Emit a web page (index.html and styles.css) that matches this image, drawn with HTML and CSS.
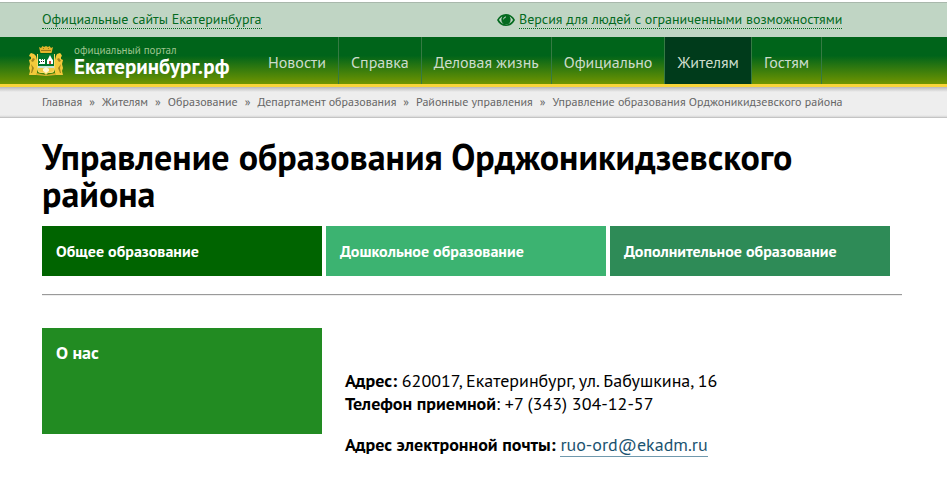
FILE: index.html
```html
<!DOCTYPE html>
<html lang="ru">
<head>
<meta charset="utf-8">
<meta name="viewport" content="width=device-width, initial-scale=1">
<title>Управление образования Орджоникидзевского района</title>
<link rel="stylesheet" href="styles.css">
</head>
<body>
<div class="topbar">
  <div class="wrap topbar-inner">
    <a class="dotted" href="#">Официальные сайты Екатеринбурга</a>
    <div class="access">
      <svg class="eye" viewBox="0 0 18 14" aria-hidden="true">
        <path fill="#046a1f" fill-rule="evenodd" d="M0 7C2 3 5 1 9 1s7 2 9 6c-2 4-5 6-9 6S2 11 0 7ZM2 7c1.600 2.700 4 4.300 7 4.300S14.400 9.700 16 7c-.8-1.500-2-2.700-3.400-3.400A4.800 4.800 0 0 1 13.600 7 4.600 4.600 0 0 1 4.400 7a4.800 4.800 0 0 1 1-3.400C4 4.300 2.800 5.500 2 7Z"/>
        <circle cx="9" cy="6.500" r="4" fill="#046a1f"/>
        <path d="M6.600 6.300A2.500 2.500 0 0 1 9 3.900" fill="none" stroke="#c0d5c4" stroke-width="1"/>
      </svg>
      <a class="dotted" href="#">Версия для людей с ограниченными возможностями</a>
    </div>
  </div>
</div>
<header class="header">
  <div class="wrap header-inner">
    <a class="brand" href="#">
      <svg class="crest" viewBox="0 0 36 32" aria-hidden="true">
        <path fill="#e3b52c" d="m11 2 2 1 1.500-2L16 2l2-1 2 1 1.500-1L23 3l2-1-1.500 6h-11Z"/>
        <path fill="#9b7a16" d="M13 5h10v1H13ZM15 3h1v1h-1ZM20 3h1v1h-1Z"/>
        <path fill="#f3c93a" d="M3 12 1 11l1-2 1-1 3 1 2 2 1 4v15H1l1-4-1-3 1-4-1-4 2-1ZM33 12l1-1-1-2-1-1-3 1-1 2-1 4v15h8l-1-4 1-3-1-4 1-4-2-1Z"/>
        <path fill="#a4871d" d="m5 13 2 1-2 3-2-1ZM3 19l3 4-2 5H3l1-5ZM31 13l-2 1 2 3 2-1ZM33 19l-3 4 2 5h1l-1-5Z"/>
        <path fill="#f7dc68" d="M9 9h18v14q0 5-4 5h-3l-2 2-2-2h-3q-4 0-4-5Z"/>
        <path fill="#00762c" d="M10 9h16v12H10Z"/>
        <path fill="#fff" d="M11 14h2v1h1v-1h1v1h1v-1h1v5h-6v-1h1v-2h-1ZM20 14l2-4 2 4 1 1v4h-6v-4Z"/>
        <path fill="#222" d="M13 16h1v1h-1ZM15 16h1v1h-1Z"/>
        <path fill="#c8483e" d="M21 16h2v3h-2Z"/>
        <path fill="#c7e2d3" d="M10 21h16v2H10Z"/>
        <path fill="#f3cc45" d="M10 23h16v1q0 3-4 3h-8q-4 0-4-3Z"/>
        <path fill="#fff7cf" d="m15 24 3-2 3 2v2l-3 2-3-2Z"/>
        <path fill="#dbb32d" d="M8 28q5 1 10 2 5-1 10-2v2l-10 1-10-1Z"/>
      </svg>
      <span class="brand-text"><small class="brand-sub">официальный портал</small><b class="brand-name">Екатеринбург.рф</b></span>
    </a>
    <nav class="nav" aria-label="Основное меню">
      <a href="#">Новости</a><a href="#">Справка</a><a href="#">Деловая жизнь</a><a href="#">Официально</a><a class="active" href="#">Жителям</a><a href="#">Гостям</a>
    </nav>
  </div>
</header>
<nav class="crumbs" aria-label="Навигация">
  <ol class="wrap crumb-list">
    <li><a href="#">Главная</a></li><li><a href="#">Жителям</a></li><li><a href="#">Образование</a></li><li><a href="#">Департамент образования</a></li><li><a href="#">Районные управления</a></li><li>Управление образования Орджоникидзевского района</li>
  </ol>
</nav>
<main class="wrap main">
  <h1>Управление образования Орджоникидзевского района</h1>
  <div class="tiles">
    <a class="tile general" href="#">Общее образование</a>
    <a class="tile preschool" href="#">Дошкольное образование</a>
    <a class="tile extra" href="#">Дополнительное образование</a>
  </div>
  <hr>
  <section class="details">
    <a class="about" href="#">О нас</a>
    <div class="contacts">
      <p><b>Адрес:</b> 620017, Екатеринбург, ул. Бабушкина, 16<br><b>Телефон приемной</b>: +7 (343) 304-12-57</p>
      <p><b>Адрес электронной почты:</b> <a class="mail" href="mailto:ruo-ord@ekadm.ru">ruo-ord@ekadm.ru</a></p>
    </div>
  </section>
</main>
</body>
</html>
```
FILE: styles.css
```css
* { box-sizing: border-box; }
body {
  margin: 0;
  background: #fff;
  color: #000;
  font-family: "PT Sans", "Noto Sans", sans-serif;
}
a { color: inherit; text-decoration: none; }
.wrap { margin: 0 45px 0 42px; }

.topbar {
  margin-top: 2px;
  border-top: 1px solid #a9b8ac;
  background: #c0d5c4;
  color: #046a1f;
  font-size: 14px;
  line-height: 17px;
}
.topbar-inner { display: grid; grid-template-columns: 455px 1fr; height: 34px; align-items: center; }
.dotted { justify-self: start; border-bottom: 1px dotted #046a1f; white-space: nowrap; }
.access { display: flex; align-items: center; gap: 4px; }
.eye { width: 18px; height: 14px; }

.header {
  background: linear-gradient(#00641a 0, #00641a 40%, #719500 100%);
  border-bottom: 3px solid #f8d43a;
}
.header-inner { display: flex; height: 47px; margin-left: 28px; }
.brand { display: flex; width: 228px; gap: 10px; align-items: center; }
.crest { width: 36px; height: 32px; }
.brand-text { display: flex; flex-direction: column; white-space: nowrap; }
.brand-sub { color: #9fc58f; font-size: 11px; line-height: 12px; }
.brand-name { color: #fff; font-size: 21px; line-height: 21px; }
.nav { display: flex; color: #ccdccb; font-size: 16px; line-height: 51px; white-space: nowrap; }
.nav a { height: 47px; padding: 0 12px; border-right: 1px solid #357a43; }
.nav .active { background: #003b1b; }

.crumbs {
  border-bottom: 1px solid #c4c4c4;
  background: linear-gradient(#b8b8b8 0, #eee 5px, #eee 28px, #d8d8d8 100%);
  color: #666;
  font-size: 12px;
}
.crumb-list { display: flex; padding: 0; list-style: none; line-height: 30px; white-space: nowrap; }
.crumb-list li + li::before { content: "»"; margin: 0 7px; }

h1 { margin: 20px 0 14px; font-size: 36px; line-height: 37px; }
.tiles { display: grid; grid-template-columns: repeat(3, 1fr); gap: 4px; margin-right: 12px; }
.tile { padding: 14px; color: #fff; font-size: 16px; font-weight: bold; line-height: 22px; white-space: nowrap; }
.general { background: #006400; }
.preschool { background: #3cb371; }
.extra { background: #2e8b57; }
hr { margin: 18px 0 32px; border: 0; border-top: 1px solid #9a9a9a; border-bottom: 1px solid #eee; }
.details { display: grid; grid-template-columns: 280px 1fr; gap: 23px; align-items: start; }
.about { min-height: 106px; padding: 13px 14px; background: #228b22; color: #fff; font-size: 18px; font-weight: bold; line-height: 24px; }
.contacts { padding-top: 41px; font-size: 18px; line-height: 23px; }
.contacts p { margin: 0 0 18px; }
.mail { border-bottom: 1px solid #7099ad; color: #1b5370; }
```
